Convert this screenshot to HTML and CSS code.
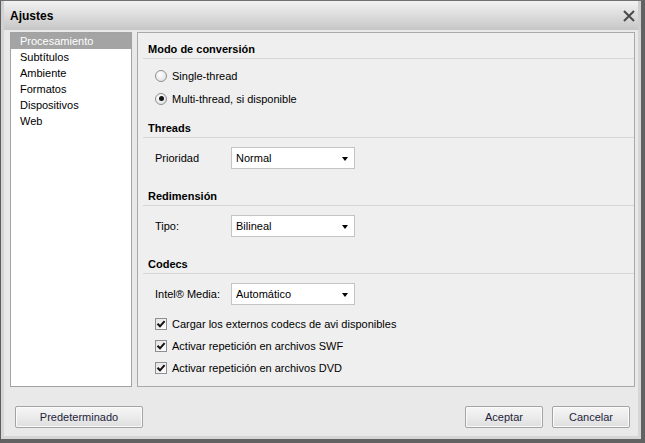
FILE: index.html
```html
<!DOCTYPE html>
<html>
<head>
<meta charset="utf-8">
<link rel="stylesheet" href="styles.css">
</head>
<body>
<div class="window">
  <div class="titlebar">
    <span class="title">Ajustes</span>
    <svg class="close" width="12" height="12" viewBox="0 0 12 12"><path d="M1 1 L11 11 M11 1 L1 11" stroke="#4a4a4a" stroke-width="2" fill="none"/></svg>
  </div>
  <div class="body">
    <div class="main">
      <ul class="nav">
        <li class="sel">Procesamiento</li>
        <li>Subtítulos</li>
        <li>Ambiente</li>
        <li>Formatos</li>
        <li>Dispositivos</li>
        <li>Web</li>
      </ul>
      <div class="panel">
        <div class="section first">
          <div class="sec-title">Modo de conversión</div>
          <div class="opts">
            <div class="opt"><span class="radio"></span><span>Single-thread</span></div>
            <div class="opt"><span class="radio checked"></span><span>Multi-thread, si disponible</span></div>
          </div>
        </div>
        <div class="section threads">
          <div class="sec-title">Threads</div>
          <div class="field"><span class="lbl">Prioridad</span><div class="select"><span>Normal</span><i class="arrow"></i></div></div>
        </div>
        <div class="section">
          <div class="sec-title">Redimensión</div>
          <div class="field"><span class="lbl">Tipo:</span><div class="select"><span>Bilineal</span><i class="arrow"></i></div></div>
        </div>
        <div class="section">
          <div class="sec-title">Codecs</div>
          <div class="field"><span class="lbl">Intel® Media:</span><div class="select"><span>Automático</span><i class="arrow"></i></div></div>
          <div class="checks">
            <div class="opt chk"><span class="cbox"><svg width="10" height="10" viewBox="0 0 10 10"><path d="M1.5 4.8 L4 7.3 L8.6 2.2" stroke="#111" stroke-width="2" fill="none"/></svg></span><span>Cargar los externos codecs de avi disponibles</span></div>
            <div class="opt chk"><span class="cbox"><svg width="10" height="10" viewBox="0 0 10 10"><path d="M1.5 4.8 L4 7.3 L8.6 2.2" stroke="#111" stroke-width="2" fill="none"/></svg></span><span>Activar repetición en archivos SWF</span></div>
            <div class="opt chk"><span class="cbox"><svg width="10" height="10" viewBox="0 0 10 10"><path d="M1.5 4.8 L4 7.3 L8.6 2.2" stroke="#111" stroke-width="2" fill="none"/></svg></span><span>Activar repetición en archivos DVD</span></div>
          </div>
        </div>
      </div>
    </div>
    <div class="footer">
      <button class="btn wide">Predeterminado</button>
      <div class="btn-group">
        <button class="btn">Aceptar</button>
        <button class="btn">Cancelar</button>
      </div>
    </div>
  </div>
</div>
</body>
</html>
```
FILE: styles.css
```css
html, body {
  margin: 0;
  padding: 0;
}
body {
  font-family: "Liberation Sans", Arial, sans-serif;
  font-size: 11px;
  color: #000;
}
.window {
  width: 645px;
  height: 443px;
  box-sizing: border-box;
  display: flex;
  flex-direction: column;
  background: #e9e9e9;
  border-left: 1px solid #5e5e5e;
  border-top: 1px solid #707070;
  border-right: 4px solid #626262;
  border-bottom: 4px solid #626262;
}
.titlebar {
  height: 29px;
  flex: none;
  display: flex;
  align-items: center;
  justify-content: space-between;
  padding: 0 6px 0 9px;
  background: linear-gradient(#f2f2f2, #dedede 45%, #c6c6c6);
  box-shadow: inset 3px 0 0 #d2d2d2, inset -3px 0 0 #cfcfcf;
}
.title {
  font-weight: bold;
  font-size: 12px;
  margin-top: 1px;
}
.close {
  display: block;
  margin-top: 1px;
}
.body {
  flex: 1;
  display: flex;
  flex-direction: column;
  padding: 2px 6px 0 9px;
  box-shadow: inset 3px 0 0 #d6d6d6, inset -3px 0 0 #d6d6d6, inset 0 -3px 0 #d6d6d6;
}
.main {
  display: flex;
  gap: 5px;
  height: 355px;
  flex: none;
}
.nav {
  list-style: none;
  margin: 0;
  padding: 0;
  width: 122px;
  box-sizing: border-box;
  border: 1px solid #a2a2a2;
  background: #fff;
}
.nav li {
  height: 16px;
  line-height: 16px;
  padding-left: 9px;
}
.nav li.sel {
  background: #a4a4a4;
  color: #fff;
}
.panel {
  flex: 1;
  box-sizing: border-box;
  border: 1px solid #a9a9a9;
  background: #efefef;
  padding-top: 8px;
}
.section {
  margin-top: 19px;
}
.section.first {
  margin-top: 0;
}
.section.threads {
  margin-top: 10px;
}
.sec-title {
  margin-left: 5px;
  padding-left: 5px;
  height: 16px;
  line-height: 16px;
  padding-bottom: 1px;
  border-bottom: 1px solid #d6d6d6;
  font-weight: bold;
}
.opts {
  padding-top: 5px;
}
.opt {
  display: flex;
  align-items: center;
  height: 23px;
  padding-left: 17px;
  gap: 5px;
}
.radio {
  width: 12px;
  height: 12px;
  box-sizing: border-box;
  border-radius: 50%;
  border: 1px solid #8d8f91;
  background: radial-gradient(circle at 40% 35%, #ffffff, #e6e6e6 70%, #d8d8d8);
  display: flex;
  align-items: center;
  justify-content: center;
}
.radio.checked::after {
  content: "";
  width: 5px;
  height: 5px;
  border-radius: 50%;
  background: #151515;
}
.field {
  display: flex;
  align-items: center;
  height: 22px;
  margin-top: 9px;
  padding-left: 17px;
}
.lbl {
  width: 76px;
  flex: none;
}
.select {
  width: 124px;
  height: 22px;
  box-sizing: border-box;
  border: 1px solid #c4c4c4;
  background: #fff;
  display: flex;
  align-items: center;
  justify-content: space-between;
  padding: 0 6px 0 4px;
}
.arrow {
  width: 0;
  height: 0;
  border-left: 3.5px solid transparent;
  border-right: 3.5px solid transparent;
  border-top: 4px solid #000;
  margin-top: 1px;
}
.checks {
  margin-top: 8px;
}
.opt.chk {
  height: 22px;
}
.cbox {
  width: 12px;
  height: 12px;
  box-sizing: border-box;
  border: 1px solid #8d8f91;
  background: linear-gradient(135deg, #e2e2e2, #ffffff);
  display: flex;
  align-items: center;
  justify-content: center;
}
.cbox svg {
  display: block;
}
.footer {
  display: flex;
  justify-content: space-between;
  padding: 19px 5px 0 5px;
}
.btn-group {
  display: flex;
  gap: 9px;
}
.btn {
  width: 78px;
  height: 22px;
  box-sizing: border-box;
  border: 1px solid #a3a3a3;
  border-radius: 2px;
  background: linear-gradient(#f6f6f6, #ebebeb 50%, #dedede);
  font-family: "Liberation Sans", Arial, sans-serif;
  font-size: 11px;
  color: #1e1e3c;
  padding: 0;
  box-shadow: inset 0 0 0 1px #fbfbfb;
}
.btn.wide {
  width: 128px;
}
```
